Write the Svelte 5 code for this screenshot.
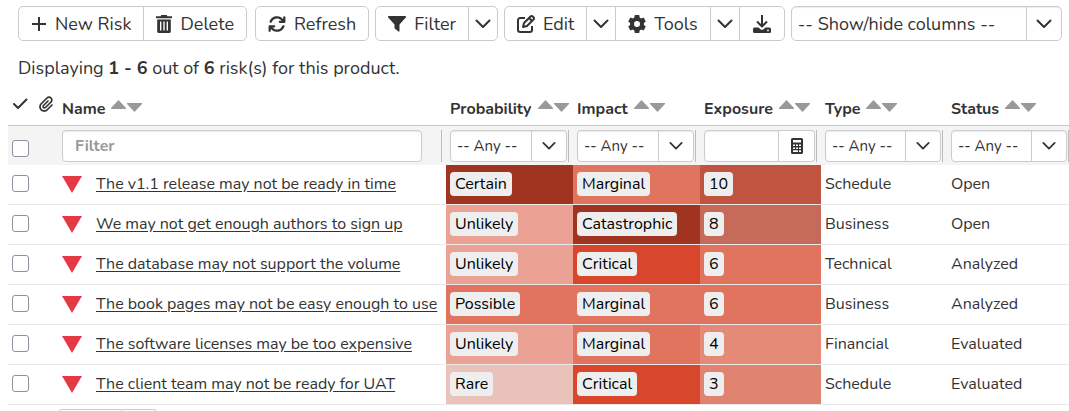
<script lang="ts">
  type Level = { label: string; color: string };

  const probability: Record<string, Level> = {
    certain: { label: 'Certain', color: '#a03420' },
    possible: { label: 'Possible', color: '#e1745f' },
    unlikely: { label: 'Unlikely', color: '#eba294' },
    rare: { label: 'Rare', color: '#eac2ba' }
  };

  const impact: Record<string, Level> = {
    catastrophic: { label: 'Catastrophic', color: '#a03420' },
    critical: { label: 'Critical', color: '#d8462c' },
    marginal: { label: 'Marginal', color: '#e1745f' }
  };

  const exposureColors: Record<number, string> = {
    3: '#e08370',
    4: '#e68a78',
    6: '#e1745f',
    8: '#c66b59',
    10: '#c15440'
  };

  const risks = [
    { name: 'The v1.1 release may not be ready in time', probability: 'certain', impact: 'marginal', exposure: 10, type: 'Schedule', status: 'Open' },
    { name: 'We may not get enough authors to sign up', probability: 'unlikely', impact: 'catastrophic', exposure: 8, type: 'Business', status: 'Open' },
    { name: 'The database may not support the volume', probability: 'unlikely', impact: 'critical', exposure: 6, type: 'Technical', status: 'Analyzed' },
    { name: 'The book pages may not be easy enough to use', probability: 'possible', impact: 'marginal', exposure: 6, type: 'Business', status: 'Analyzed' },
    { name: 'The software licenses may be too expensive', probability: 'unlikely', impact: 'marginal', exposure: 4, type: 'Financial', status: 'Evaluated' },
    { name: 'The client team may not be ready for UAT', probability: 'rare', impact: 'critical', exposure: 3, type: 'Schedule', status: 'Evaluated' }
  ];

  const columns = ['Name', 'Probability', 'Impact', 'Exposure', 'Type', 'Status'];

  let selected = $state(risks.map(() => false));
  let allSelected = $derived(selected.every(Boolean));

  function toggleAll() {
    const next = !allSelected;
    selected = risks.map(() => next);
  }
</script>

{#snippet chevron()}
  <svg class="chevron" viewBox="0 0 16 10" aria-hidden="true">
    <path d="M1.500 1.500 8 8l6.500-6.500" />
  </svg>
{/snippet}

{#snippet anyFilter(label: string)}
  <div class="filter">
    <div class="dropdown">
      <select aria-label={label}>
        <option>-- Any --</option>
      </select>
      <span class="arrow">{@render chevron()}</span>
    </div>
    <span class="resizer"></span>
  </div>
{/snippet}

<div class="toolbar">
  <div class="group">
    <button>
      <svg class="icon small" viewBox="0 0 16 16" aria-hidden="true">
        <path class="line" d="M8 1v14M1 8h14" />
      </svg>
      New Risk
    </button>
    <button>
      <svg class="icon small" viewBox="0 0 16 18" aria-hidden="true">
        <path fill-rule="evenodd" d="M5.400 0h5.200l.8 1.200H16v2H0v-2h4.600zM1.200 4.400h13.600V16.400a1.600 1.600 0 0 1-1.600 1.600H2.800a1.600 1.600 0 0 1-1.600-1.600zM4 6.600v9h1.400v-9zM7.300 6.600v9h1.400v-9zM10.600 6.600v9H12v-9z" />
      </svg>
      Delete
    </button>
  </div>

  <div class="group">
    <button>
      <svg class="icon" viewBox="0 0 512 512" aria-hidden="true">
        <path d="M105 203c22-62 82-107 151-107 44 0 84 18 113 47l17 17h-50a32 32 0 0 0 0 64h128a32 32 0 0 0 32-32V64a32 32 0 0 0-64 0v51l-18-17A224 224 0 0 0 45 181a32 32 0 0 0 60 22zM39 289a32 32 0 0 0-23 31v128a32 32 0 0 0 64 0v-51l18 17a224 224 0 0 0 369-83 32 32 0 0 0-60-22 160 160 0 0 1-264 60l-17-17h50a32 32 0 0 0 0-64H48a32 32 0 0 0-9 1z" />
      </svg>
      Refresh
    </button>
  </div>

  <div class="group">
    <button>
      <svg class="icon" viewBox="0 0 18 18" aria-hidden="true">
        <path d="M.8 1h16.400a.8.8 0 0 1 .6 1.400L11.500 9.500V16a.6.6 0 0 1-1 .5l-3.500-2.700a1 1 0 0 1-.5-.8V9.500L.2 2.400A.8.8 0 0 1 .8 1z" />
      </svg>
      Filter
    </button>
    <button class="toggle" aria-label="Filter options">{@render chevron()}</button>
  </div>

  <div class="group">
    <button>
      <svg class="icon" viewBox="0 0 18 18" aria-hidden="true">
        <path class="line" d="M8 3H3.200A2.200 2.200 0 0 0 1 5.200v9.600A2.200 2.200 0 0 0 3.200 17h9.600a2.200 2.200 0 0 0 2.200-2.200V11M6 12l1-4 6.500-6.500a1.500 1.500 0 0 1 2.200 0l.8.8a1.500 1.500 0 0 1 0 2.200L10 11zM12 3l3 3" />
      </svg>
      Edit
    </button>
    <button class="toggle" aria-label="Edit options">{@render chevron()}</button>
    <button>
      <svg class="icon" viewBox="0 0 18 18" aria-hidden="true">
        <path fill-rule="evenodd" d="M6.800 0h4.400l.5 2.500 1.500.9 2.400-.8 2.200 3.800-1.900 1.700v1.800l1.900 1.700-2.200 3.800-2.400-.8-1.500.9-.5 2.500H6.800l-.5-2.500-1.500-.9-2.400.8L.2 11.600l1.900-1.700V8.100L.2 6.400l2.200-3.800 2.400.8 1.500-.9zM9 6a3 3 0 1 0 0 6 3 3 0 0 0 0-6z" />
      </svg>
      Tools
    </button>
    <button class="toggle" aria-label="Tools options">{@render chevron()}</button>
    <button class="icon-only" aria-label="Download">
      <svg class="icon" viewBox="0 0 18 18" aria-hidden="true">
        <path class="line" d="M9 0v11M4 6.500l5 5 5-5" />
        <path fill-rule="evenodd" d="M1.500 12.500h4l2.300 2a2 2 0 0 0 2.400 0l2.300-2h4A1.500 1.500 0 0 1 18 14v2.500a1.500 1.500 0 0 1-1.500 1.500h-15A1.500 1.500 0 0 1 0 16.500V14a1.500 1.500 0 0 1 1.500-1.500zM15 14.500a.9.9 0 1 0 0 1.800.9.9 0 0 0 0-1.800z" />
      </svg>
    </button>
  </div>

  <div class="dropdown columns">
    <select aria-label="Show/hide columns">
      <option>-- Show/hide columns --</option>
    </select>
    <span class="arrow">{@render chevron()}</span>
  </div>
</div>

<p class="summary">
  Displaying <b>1 - 6</b> out of <b>6</b> risk(s) for this product.
</p>

<table>
  <colgroup>
    <col class="col-check" />
    <col class="col-clip" />
    <col />
    <col class="col-level" />
    <col class="col-level" />
    <col class="col-exposure" />
    <col class="col-type" />
    <col class="col-status" />
  </colgroup>
  <thead>
    <tr class="titles">
      <th aria-label="Selected">
        <svg class="mark" viewBox="0 0 16 16" aria-hidden="true">
          <path class="tick" d="M2 8l4 4 8.500-8.500" />
        </svg>
      </th>
      <th aria-label="Attachments">
        <svg class="mark" viewBox="0 0 448 512" aria-hidden="true">
          <path d="M364.200 83.800c-24.400-24.400-64-24.400-88.400 0l-184 184c-42.100 42.100-42.100 110.300 0 152.400s110.300 42.100 152.400 0l152-152c10.900-10.900 28.700-10.900 39.600 0s10.900 28.700 0 39.600l-152 152c-64 64-167.600 64-231.600 0s-64-167.600 0-231.600l184-184c46.300-46.300 121.300-46.300 167.600 0s46.300 121.300 0 167.600l-176 176c-28.600 28.600-75 28.600-103.600 0s-28.600-75 0-103.600l144-144c10.900-10.900 28.700-10.900 39.600 0s10.900 28.700 0 39.600l-144 144c-6.700 6.700-6.700 17.700 0 24.400s17.700 6.700 24.400 0l176-176c24.400-24.400 24.400-64 0-88.400z" />
        </svg>
      </th>
      {#each columns as column}
        <th>
          <span class="title">
            {column}
            <svg class="sort" viewBox="0 0 31 12" aria-hidden="true">
              <path d="M7.500 0 15 8v1H0V8zM16 3h15v1l-7.500 8L16 4z" />
            </svg>
          </span>
        </th>
      {/each}
    </tr>
    <tr class="filters">
      <td class="all">
        <input type="checkbox" aria-label="Select all risks" checked={allSelected} onchange={toggleAll} />
      </td>
      <td></td>
      <td>
        <div class="filter name-filter">
          <input type="text" placeholder="Filter" aria-label="Filter by name" />
          <span class="resizer"></span>
        </div>
      </td>
      <td>{@render anyFilter('Filter by probability')}</td>
      <td>{@render anyFilter('Filter by impact')}</td>
      <td>
        <div class="filter">
          <div class="range">
            <input type="text" aria-label="Filter by exposure" />
            <button aria-label="Choose exposure range">
              <svg viewBox="0 0 12 16" aria-hidden="true">
                <path fill-rule="evenodd" d="M1.500 0h9A1.500 1.500 0 0 1 12 1.500v13a1.500 1.500 0 0 1-1.500 1.500h-9A1.500 1.500 0 0 1 0 14.500v-13A1.500 1.500 0 0 1 1.500 0zM2 2v2.500h8V2zM2 6.500v1.600h2V6.500zM5 6.500v1.600h2V6.500zM8 6.500v1.600h2V6.500zM2 9.400V11h2V9.400zM5 9.400V11h2V9.400zM8 9.400V11h2V9.400zM2 12.300v1.600h5v-1.600zM8 12.300v1.600h2v-1.600z" />
              </svg>
            </button>
          </div>
          <span class="resizer"></span>
        </div>
      </td>
      <td>{@render anyFilter('Filter by type')}</td>
      <td class="last">{@render anyFilter('Filter by status')}</td>
    </tr>
  </thead>
  <tbody>
    {#each risks as risk, i}
      <tr>
        <td><input type="checkbox" aria-label={risk.name} bind:checked={selected[i]} /></td>
        <td></td>
        <td>
          <div class="risk">
            <svg viewBox="0 0 20 17" aria-hidden="true"><path d="M0 0h20L10 17z" /></svg>
            <a href="#risk-{i + 1}">{risk.name}</a>
          </div>
        </td>
        <td style:background-color={probability[risk.probability].color}>
          <span class="badge">{probability[risk.probability].label}</span>
        </td>
        <td style:background-color={impact[risk.impact].color}>
          <span class="badge">{impact[risk.impact].label}</span>
        </td>
        <td style:background-color={exposureColors[risk.exposure]}>
          <span class="badge">{risk.exposure}</span>
        </td>
        <td>{risk.type}</td>
        <td>{risk.status}</td>
      </tr>
    {/each}
  </tbody>
</table>

<div class="pager">
  <button aria-label="Previous page"></button>
  <button aria-label="Next page"></button>
</div>

<style>
  :global(body) {
    background: #fff;
    color: #333;
    font-family: Nunito, Lato, sans-serif;
    font-size: 16px;
    line-height: 24px;
    overflow: hidden;
  }

  button,
  input,
  select {
    font: inherit;
    color: inherit;
    margin: 0;
    box-sizing: border-box;
  }

  .toolbar {
    display: flex;
    gap: 6px;
    padding: 6px 7px 0 18px;
  }

  .group {
    display: flex;
    height: 35px;
    box-sizing: border-box;
    border: 1px solid #ccc;
    border-radius: 5px;
    background: #fff;
  }

  .group:first-child {
    margin-right: 2px;
  }

  .group button {
    display: flex;
    align-items: center;
    gap: 8px;
    padding: 0 12px;
    border: 0;
    background: none;
    font-size: 18px;
    white-space: nowrap;
    cursor: pointer;
  }

  .group button + button {
    border-left: 1px solid #ccc;
  }

  .group .toggle {
    padding: 0 6px;
  }

  .group .icon-only {
    padding: 0 13px;
  }

  .icon {
    width: 18px;
    height: 18px;
    fill: #333;
  }

  .icon.small {
    width: 16px;
  }

  .icon .line {
    fill: none;
    stroke: #333;
    stroke-width: 2;
    stroke-linejoin: round;
  }

  .chevron {
    width: 16px;
    height: 10px;
    fill: none;
    stroke: #333;
    stroke-width: 2;
    stroke-linecap: round;
    stroke-linejoin: round;
  }

  .dropdown {
    display: grid;
    flex: 1;
    min-width: 0;
    height: 32px;
    box-sizing: border-box;
    border: 1px solid #ccc;
    border-radius: 4px;
    background: #fff;
    box-shadow: inset 0 1px 1px rgba(0, 0, 0, 0.08);
  }

  .dropdown select {
    grid-area: 1 / 1;
    width: 100%;
    padding: 0 36px 0 6px;
    border: 0;
    background: none;
    appearance: none;
    font-size: 15px;
  }

  .arrow {
    grid-area: 1 / 1;
    justify-self: end;
    display: flex;
    align-items: center;
    justify-content: center;
    width: 35px;
    box-sizing: border-box;
    border-left: 1px solid #ccc;
    pointer-events: none;
  }

  .arrow .chevron {
    width: 14px;
  }

  .columns {
    height: 35px;
    border-radius: 5px;
  }

  .columns select {
    font-size: 18px;
  }

  .columns .chevron {
    width: 16px;
  }

  .summary {
    margin: 15px 18px 12px;
    font-size: 18px;
  }

  table {
    width: calc(100% - 8px);
    margin-left: 8px;
    table-layout: fixed;
    border-collapse: separate;
    border-spacing: 0;
  }

  .col-check {
    width: 28px;
  }

  .col-clip {
    width: 22px;
  }

  .col-level {
    width: 127px;
  }

  .col-exposure {
    width: 121px;
  }

  .col-type {
    width: 126px;
  }

  .col-status {
    width: 122px;
  }

  th,
  td {
    padding: 0 4px;
    box-sizing: border-box;
    text-align: left;
    white-space: nowrap;
  }

  .titles th {
    height: 34px;
    border-bottom: 1px solid #fdcb26;
  }

  th:nth-child(2) {
    padding: 0 2px;
  }

  .title {
    display: flex;
    align-items: center;
    gap: 6px;
  }

  .sort {
    flex: none;
    width: 31px;
    height: 12px;
    margin-bottom: 6px;
    fill: #999;
  }

  .mark {
    display: block;
    width: 16px;
    height: 16px;
    margin-bottom: 10px;
    fill: #333;
  }

  .tick {
    fill: none;
    stroke: #333;
    stroke-width: 2;
    stroke-linecap: round;
    stroke-linejoin: round;
  }

  .filters td {
    height: 39px;
    background: #f4f4f4;
  }

  .filters .all {
    padding-top: 6px;
  }

  .filters .last {
    padding-right: 0;
  }

  .filter {
    display: flex;
    gap: 1px;
  }

  .name-filter {
    gap: 19px;
  }

  .resizer {
    width: 1px;
    background: #bbb;
  }

  input[type='text'] {
    flex: 1;
    min-width: 0;
    height: 32px;
    padding: 0 12px;
    border: 1px solid #ccc;
    border-radius: 4px;
    background: #fff;
    box-shadow: inset 0 1px 1px rgba(0, 0, 0, 0.08);
  }

  input::placeholder {
    color: #999;
    font-weight: bold;
    opacity: 1;
  }

  .range {
    display: flex;
    flex: 1;
    min-width: 0;
  }

  .range input[type='text'] {
    border-radius: 4px 0 0 4px;
  }

  .range button {
    display: flex;
    align-items: center;
    justify-content: center;
    width: 36px;
    padding: 0;
    border: 1px solid #ccc;
    border-left: 0;
    border-radius: 0 4px 4px 0;
    background: #fff;
  }

  .range svg {
    width: 12px;
    height: 16px;
    fill: #333;
  }

  input[type='checkbox'] {
    display: block;
    width: 17px;
    height: 17px;
    border: 1px solid #8f8f9d;
    border-radius: 3px;
    background: #fff;
    appearance: none;
  }

  input[type='checkbox']:checked {
    background: #333;
  }

  tbody td {
    height: 40px;
    padding-bottom: 2px;
    border-bottom: 1px solid #e9e9e9;
  }

  .risk {
    display: flex;
    align-items: center;
    gap: 14px;
  }

  .risk svg {
    flex: none;
    width: 20px;
    height: 17px;
    margin-top: 2px;
    fill: #e63946;
  }

  .risk a {
    color: #333;
    text-underline-offset: 2px;
  }

  .badge {
    display: inline-block;
    padding: 0 5px;
    border-radius: 4px;
    background: #eee;
    color: #000;
  }

  .pager {
    display: flex;
    margin: 4px 58px 0;
  }

  .pager button {
    width: 64px;
    height: 30px;
    border: 1px solid #ccc;
    border-radius: 4px 0 0 4px;
    background: #fff;
  }

  .pager button + button {
    width: 35px;
    border-left: 0;
    border-radius: 0 4px 4px 0;
  }
</style>
